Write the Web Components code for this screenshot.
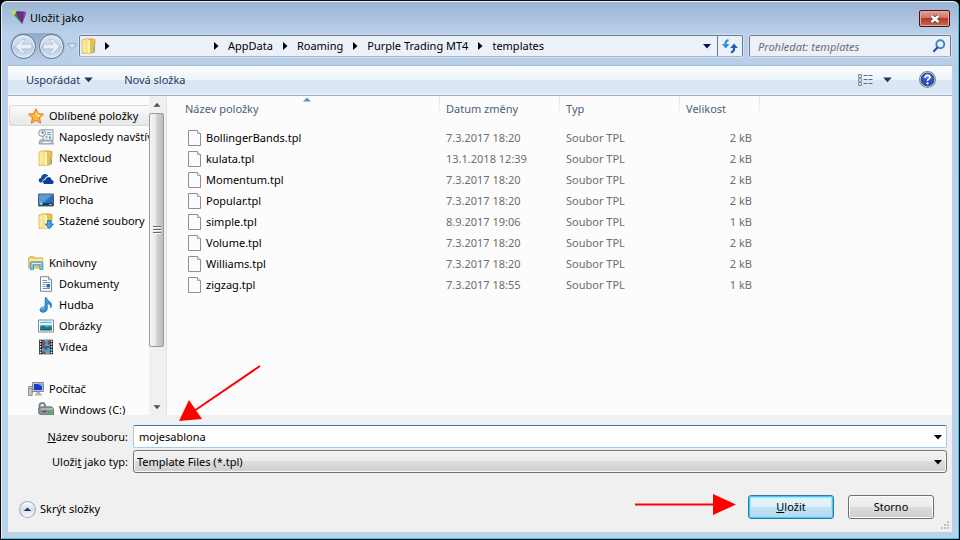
<!DOCTYPE html>
<html lang="cs">
<head>
<meta charset="utf-8">
<title>Uložit jako</title>
<style>
html,body{margin:0;background:#000}
body{font:11px/16px "Noto Sans","Open Sans",sans-serif;color:#000}
</style>
</head>
<body>
<save-dialog></save-dialog>

<script>
const FOLDER = `<path d="M1 2l5-1.500 1.500.5v14l-6.500.5z" fill="#f6df86" stroke="#cfae4a" stroke-width=".7"/><path d="M7.500 1.500L9 .6l5 1V7l-.8 1v6.500l-5.700 1z" fill="#e5c054" stroke="#c79f37" stroke-width=".7"/><path d="M6.700 1.500v13.700l2.300.3V2.500z" fill="#fff3b8"/><path d="M2.200 3v11.500M4 2.400v12" stroke="#fff2b5" stroke-width=".9"/>`;
const ICONS = {
  logo: `<path d="M0 1h9l3 13z" fill="#4aa03c"/><path d="M0 1h6L4 6z" fill="#e3dd25"/><path d="M3 5l2-2 5 10z" fill="#2a9560"/><path d="M5 1.500h8.500q2 .5 1 3L11.500 13q-.6 1.300-1.200 0L4.600 2.500z" fill="#6b2a86"/><path d="M13 1.500q3 .5 1.500 3L11.400 13z" fill="#8a4ba3"/>`,
  folder: FOLDER + `<path d="M13.300 8.500v5" stroke="#58a7dd" stroke-width="1.200"/>`,
  downloads: FOLDER + `<path d="M9.500 7.500h3.600V11h2.400l-4.200 4.700L7.200 11h2.300z" fill="#36a5ea" stroke="#1a6fb3" stroke-width=".8"/>`,
  star: `<path d="M8 .8l2.200 4.900 5.300.5-4 3.600 1.200 5.300L8 12.400l-4.700 2.700 1.200-5.300-4-3.600 5.300-.5z" fill="#fcb53a" stroke="#e0761c" stroke-width="1"/><path d="M8 3l1.500 3.600 3.300.3-2.600 2.200L8 7z" fill="#ffe48a"/>`,
  recent: `<path d="M5 .8h10v10.700H5z" fill="#edf3f8" stroke="#8d9aa5"/><path d="M9 3.500h4M9 5.500h4M7 8h3" stroke="#5a9bd0"/><path d="M11 7.500h2v2h-2z" fill="#6aa84f"/><path d="M2 11h12l1.500 4H1z" fill="#bcc2c7" stroke="#868e94" stroke-width=".8"/><path d="M5 13.500h7" stroke="#fff"/><circle cx="4" cy="4" r="3.400" fill="#eef2f4" stroke="#8d959b"/><path d="M4 1.800V4h2" stroke="#4d5964" fill="none" stroke-width=".9"/>`,
  onedrive: `<path d="M2.500 11.500Q.5 11 .6 9t2.500-2.200Q3.500 3 7 3q2.500 0 3.500 2-3 .2-3.800 3-2.500.5-2.200 3.500z" fill="#0e4da4"/><path d="M6.500 13Q4.700 12.500 5 10.700t2.400-2Q8 6 10.500 6t3.200 3q2.100.2 2 2.200T13.800 13z" fill="#0a3f97"/>`,
  desktop: `<path d="M.5 2h15v12H.5z" fill="#2c6cba" stroke="#54626f"/><path d="M1 2.500h14L6 10H1z" fill="#5898d8"/><path d="M1 11h14v2.500H1z" fill="#1b365f"/><circle cx="3" cy="11.500" r="1.800" fill="#53c1e8"/><path d="M2 11h2v1H2z" fill="#f3cf40"/><path d="M11 12.500h3" stroke="#aab7c6"/>`,
  libraries: `<path d="M.7 3l1-1.300h4l1 1.300h8v10H.7z" fill="#f1cd62" stroke="#cfa43b" stroke-width=".8"/><path d="M1.300 4.700h13" stroke="#fff1b3" stroke-width="1.500"/><path d="M2.300 14.500V9q0-2 2-2h8.500q2 0 2 2v5.500h-3V10H5.500v4.500z" fill="#83c5eb" stroke="#398bbf" stroke-width=".8"/><path d="M4 8.500h9" stroke="#d9f1ff"/>`,
  document: `<path d="M2.500.7h8l3 3v11.600h-11z" fill="#fdfdfd" stroke="#7e868e"/><path d="M10.500.7v3h3" fill="#dfe4e9" stroke="#7e868e" stroke-width=".8"/><path d="M4.500 4.500H9M4.500 6.500h7.500M4.500 8.500h3M4.500 10.500h3M4.500 12.500h7.500" stroke="#7295bd"/><path d="M8.500 8h3.500v3.500H8.500z" fill="#2465ad"/>`,
  music: `<path d="M8.300.5q.6 2.800 3.500 4.100 3.200 2.200 1 6.400.5-3.500-3.500-4.500v5.300q-.2 3.400-4.400 3.600Q1.600 15 2 12.500q.8-3 5-2.700L7.300.5z" fill="#3795d9" stroke="#1c67a8" stroke-width=".7"/><path d="M3.200 12q1-1.400 3-1.200" stroke="#b9e3ff" fill="none"/>`,
  pictures: `<path d="M.5 2h15v12H.5z" fill="#fff" stroke="#7f8a93"/><path d="M2.200 3.700h11.600v8.600H2.200z" fill="#5db4e6"/><path d="M2.200 6h11.600" stroke="#dff4ff" stroke-width="2"/><path d="M2.200 8.500q4-2 6 .7 3-1 5.600-.8v3.900H2.200z" fill="#2a7a63"/><path d="M2.200 11h11.600v1.300H2.200z" fill="#1f5d86"/>`,
  video: `<path d="M1 .7h14v14.600H1z" fill="#26292d"/><path d="M4 1h8v6.500H4z" fill="#4c9fda"/><path d="M4 8.500h8V15H4z" fill="#4aa2e0"/><path d="M4 1h2l1.500 3L6 7.500H4zM12 1h-1l-1.500 3L11 6l1-1zM5 8.500h5l-2 3zM4 13l2-1 2 3H4z" fill="#8f4a31"/><path d="M2.500 1.500v13.500M13.500 1.500v13.500" stroke="#e7eaec" stroke-width="1.600" stroke-dasharray="1.500 1.300"/>`,
  computer: `<path d="M.5 5.500h3.800v9H.5z" fill="#c3c8cc" stroke="#7c848b" stroke-width=".8"/><path d="M1.500 7.500h2" stroke="#4a9e3d"/><path d="M4.500 1.500h11v9h-11z" fill="#dfe3e6" stroke="#80888f"/><path d="M5.800 2.800h8.400v6.400H5.800z" fill="#153fc0"/><path d="M9.500 2.800h4.700v3z" fill="#6aa3f5"/><path d="M8.500 11h3.500v1.800h2v1.700h-7v-1.700h1.500z" fill="#aeb4b9"/>`,
  drive: `<path d="M1.500 8V3.500Q2 1 4.300 1T7 3.500V8" fill="none" stroke="#7e858b" stroke-width="2"/><path d="M.7 6.500L3 4.800h10.500l2 1.700v6.500H3L.7 11.500z" fill="#8d9398" stroke="#60676d" stroke-width=".8"/><path d="M3 7h12" stroke="#d3d7da"/><path d="M10 8.500h3.500v3H10z" fill="#2fc146"/><path d="M4 9.500h4.500" stroke="#4e555b" stroke-width="1.500"/>`,
  file: `<path d="M1.500.5h9l3 3v12h-12z" fill="#fbfbfb" stroke="#8f8f8f"/><path d="M10.500.5v3h3" fill="#f1f1f1" stroke="#8f8f8f" stroke-width=".8"/>`,
  refresh: `<path d="M3.500 8V5.500Q3.500 3 6.500 2" fill="none" stroke="#2b93d2" stroke-width="2.200"/><path d="M0 6h7.500L3.700 10.500z" fill="#2b93d2"/><path d="M12 8v3q0 2.500-3 3.500" fill="none" stroke="#1f60b4" stroke-width="2.200"/><path d="M8.200 10h7.600L12 5.500z" fill="#1f60b4"/>`,
  search: `<circle cx="9.500" cy="6" r="4.500" fill="#eef7ff" stroke="#3987d0" stroke-width="2.200"/><path d="M6.500 9.500L1.500 14.500" stroke="#22549b" stroke-width="2.500"/>`,
  view: `<path d="M.5 2.500h3v3h-3zM.5 6.500h3v3h-3zM.5 10.500h3v3h-3z" fill="#fff" stroke="#8593a5"/><path d="M1.500 7.500h1v1h-1z" fill="#d44a32"/><path d="M1.500 3.500h1v1h-1zM1.500 11.500h1v1h-1z" fill="#3b6fb4"/><path d="M5.500 3.500h9.500M5.500 7.500h9.500M5.500 11.500h9.500" stroke="#596b85" stroke-dasharray="4 1"/>`,
  help: `<circle cx="8" cy="8" r="7.500" fill="#dadde2" stroke="#7d828b"/><circle cx="8" cy="8" r="6" fill="#2a4fc0" stroke="#1d2f7c" stroke-width=".8"/><path d="M3.500 7q1-4 4.500-4t4.500 4z" fill="#6c8fe6"/><path d="M5.800 6.200Q6 4 8.100 4t2.100 2q0 1.200-1.200 1.700T8 9.500" fill="none" stroke="#fff" stroke-width="1.500"/><circle cx="8" cy="11.700" r="1" fill="#fff"/>`,
  down: `<path d="M4 6h8l-4 4.500z" fill="currentColor"/>`,
  right: `<path d="M6 4v8l4.500-4z" fill="currentColor"/>`,
  hollow: `<path d="M3 5.500h10L8 11z" fill="#e6eff8" stroke="#8299b6"/>`,
  collapse: `<defs><linearGradient id="c" x2="0" y2="1"><stop stop-color="#fff"/><stop offset=".5" stop-color="#d9dfe8"/><stop offset="1" stop-color="#fbfdff"/></linearGradient></defs><circle cx="8" cy="8" r="7.500" fill="url(#c)" stroke="#a3afc4"/><path d="M4.500 9.500h7L8 6z" fill="#1b3a72"/>`,
  close: `<path d="M4.500 5l7 6M11.500 5l-7 6" stroke="#5b3a42" stroke-width="4.200"/><path d="M4.500 5l7 6M11.500 5l-7 6" stroke="#fff" stroke-width="2.400"/>`
};

const BASE = `<style>
:host,*{box-sizing:border-box}
button,input,select{font:inherit;color:inherit;margin:0;padding:0;border:0;background:none;border-radius:0;min-width:0}
a{color:inherit;text-decoration:none}
</style>`;

function define(name, html, setup) {
  const template = document.createElement('template');
  template.innerHTML = BASE + html;
  customElements.define(name, class extends HTMLElement {
    constructor() {
      super();
      this.attachShadow({mode: 'open'}).append(template.content.cloneNode(true));
    }
    connectedCallback() { if (setup) setup(this, this.shadowRoot); }
  });
}

define('ui-icon', `<style>
:host{display:block;flex:none;width:var(--icon-size,16px);height:var(--icon-size,16px)}
svg{display:block;width:100%;height:100%}
</style><svg viewBox="0 0 16 16" aria-hidden="true"></svg>`,
(host, root) => { root.querySelector('svg').innerHTML = ICONS[host.getAttribute('name')]; });

define('title-bar', `<style>
:host{display:flex;align-items:center;gap:3px;padding:0 2px 0 3px;height:34px}
h1{font:inherit;margin:0;flex:1}
button{width:31px;height:17px;display:grid;place-items:center;border:1px solid #43141c;border-radius:2px;box-shadow:inset 0 0 0 1px #e7a69c;background:linear-gradient(#e0a096,#cf7465 48%,#b23a26 50%,#c96a55)}
</style>
<ui-icon name="logo"></ui-icon><h1><slot></slot></h1>
<button aria-label="Zavřít"><ui-icon name="close"></ui-icon></button>`);

define('nav-buttons', `<style>
:host{display:flex;align-items:center;flex:none}
.pair{display:flex;gap:3px;padding:1px;border-radius:14px;background:linear-gradient(#8fabca,#b5cbe3)}
.pair button{width:25px;height:25px;border-radius:50%;border:1px solid #60748b;box-shadow:inset 0 0 0 1px #e7f0f9;background:linear-gradient(#d9e6f3,#c6d6e8 48%,#b2c6de 50%,#d6e6f5)}
svg{display:block;margin:auto;width:19px;height:19px}
</style>
<div class="pair">
<button aria-label="Zpět"><svg viewBox="0 0 16 16"><path d="M1 8l6-6h3L6.500 6H15v4H6.500l3.500 4H7z" fill="#e6eff8" stroke="#a5b9cf" stroke-width=".6"/></svg></button>
<button aria-label="Vpřed"><svg viewBox="0 0 16 16"><path d="M15 8L9 2H6l3.500 4H1v4h8.500L6 14h3z" fill="#e6eff8" stroke="#a5b9cf" stroke-width=".6"/></svg></button>
</div>
<button aria-label="Poslední umístění"><ui-icon name="hollow" style="--icon-size:14px"></ui-icon></button>`);

define('address-bar', `<style>
:host{display:flex;flex:1;min-width:0;height:22px;border:1px solid #6f7a88;border-bottom-color:#a9b5c3;border-radius:2px;background:#eaf1f9;box-shadow:0 0 0 1px #d3e1f1}
nav{flex:1;display:flex;align-items:center;padding-left:1px;min-width:0;white-space:nowrap}
nav button{line-height:20px;padding:0 2px}
.user{width:89px;height:20px}
nav .arrow{margin:0 2px}
.icon{display:grid;place-items:center;width:20px;color:#00104f}
.reload{width:25px;border-left:1px solid #6f7a88}
</style>
<nav aria-label="Umístění"></nav>
<button class="icon" aria-label="Předchozí umístění"><ui-icon name="down"></ui-icon></button>
<button class="icon reload" aria-label="Aktualizovat"><ui-icon name="refresh"></ui-icon></button>`,
(host, root) => {
  const arrow = '<ui-icon class="arrow" name="right"></ui-icon>';
  root.querySelector('nav').innerHTML = '<ui-icon name="folder"></ui-icon>' + arrow +
    '<button class="user" aria-label="Uživatel"></button>' +
    host.getAttribute('path').split('/').map(p => `${arrow}<button>${p}</button>`).join('');
});

define('search-box', `<style>
:host{display:flex;align-items:center;width:202px;height:22px;margin-left:6px;padding:0 4px 0 8px;border:1px solid #6f7a88;border-bottom-color:#a9b5c3;border-radius:2px;background:#eaf1f9;box-shadow:0 0 0 1px #d3e1f1}
input{flex:1;height:20px;outline:0;font-style:italic}
input::placeholder{color:#6d6d6d;opacity:1}
</style><input type="search" aria-label="Prohledat" placeholder="Prohledat: templates"><ui-icon name="search" style="--icon-size:14px"></ui-icon>`);

define('command-bar', `<style>
:host{display:flex;align-items:center;height:31px;padding:0 14px 2px 16px;color:#1e395b;border-top:1px solid #a3bbd6;border-bottom:1px solid #a0b0c8;background:linear-gradient(#fbfdff,#edf4fc 48%,#dce7f5 50%,#dae6f4 90%,#e9f2fb)}
button{display:flex;align-items:center;height:24px;padding:0 2px;white-space:nowrap}
.new{margin-left:23px}
.space{flex:1}
.view{gap:5px}
.help{margin-left:19px}
</style>
<button>Uspořádat<ui-icon name="down" style="--icon-size:17px"></ui-icon></button>
<button class="new">Nová složka</button>
<span class="space"></span>
<button class="view" aria-label="Změnit zobrazení"><ui-icon name="view"></ui-icon><ui-icon name="down" style="--icon-size:17px"></ui-icon></button>
<button class="help" aria-label="Nápověda"><ui-icon name="help" style="--icon-size:17px"></ui-icon></button>`);

define('nav-item', `<style>
:host{display:block}
a{display:flex;align-items:center;gap:5px;height:21px;padding-left:29px;white-space:nowrap}
:host([top]) a{padding-left:19px}
:host([top]:not(:first-child)){margin-top:21px}
:host([selected]) a{padding-left:18px;border:1px solid #d9d9d9;border-right:0;border-radius:3px 0 0 3px;background:linear-gradient(#fafafa,#e7e7e7)}
</style><a href="#"><slot></slot></a>`,
(host, root) => root.querySelector('a').insertAdjacentHTML('afterbegin', `<ui-icon name="${host.getAttribute('icon')}"></ui-icon>`));

define('scroll-bar', `<style>
:host{display:flex;flex-direction:column;flex:none;width:17px;background:#f0f0f0}
button{height:17px;width:16px;display:grid;place-items:center;color:#505050}
.up ui-icon{rotate:180deg}
.track{flex:1}
.thumb{height:82%;width:15px;display:flex;flex-direction:column;gap:1px;justify-content:center;align-items:center;border:1px solid #9a9a9a;border-radius:2px;background:linear-gradient(90deg,#f6f6f6,#e6e6e8 45%,#cfcfd2 55%,#bdbdc0)}
i{width:8px;height:2px;background:#666;border-bottom:1px solid #fff}
</style>
<button class="up" aria-label="Nahoru"><ui-icon name="down" style="--icon-size:14px"></ui-icon></button>
<div class="track"><div class="thumb"><i></i><i></i><i></i></div></div>
<button aria-label="Dolů"><ui-icon name="down" style="--icon-size:14px"></ui-icon></button>`);

define('nav-pane', `<style>
:host{display:flex;flex:none;width:159px;min-height:0;border-right:1px solid #d3e4f4;background:#fcfcfc}
nav{flex:1;min-width:0;overflow:hidden;padding:9px 0 0 1px}
</style><nav aria-label="Složky"><slot></slot></nav><scroll-bar></scroll-bar>`);

define('file-list', `<style>
:host{display:block;flex:1;min-width:0;overflow:hidden;background:#fcfcfc}
table{border-collapse:separate;border-spacing:0;table-layout:fixed;width:593px}
th,td{padding:0 0 0 6px;text-align:left;font-weight:400;white-space:nowrap;color:#6d6d6d}
thead th{height:22px;color:#4c607a;padding-top:3px;line-height:18px;border-right:1px solid;border-image:linear-gradient(#d5e4f2,#fcfcfc) 1;position:relative}
thead th:first-child{padding-left:18px}
thead svg{position:absolute;top:1px;left:50%;width:8px;height:5px}
tbody::before{content:"";display:block;height:9px}
tbody th{height:21px;padding-left:20px;color:#000}
tbody th span{display:flex;align-items:center;gap:3px}
td:last-child{text-align:right;padding-right:8px}
</style>
<table><colgroup><col style="width:273px"><col style="width:120px"><col style="width:120px"><col style="width:80px"></colgroup>
<thead><tr><th scope="col" aria-sort="ascending">Název položky<svg viewBox="0 0 8 5" aria-hidden="true"><path d="M0 4.500L4 .5l4 4z" fill="#5d97bd"/></svg></th><th scope="col">Datum změny</th><th scope="col">Typ</th><th scope="col">Velikost</th></tr></thead>
<tbody></tbody></table>`,
(host, root) => {
  const files = [['BollingerBands','7.3.2017 18:20',2],['kulata','13.1.2018 12:39',2],['Momentum','7.3.2017 18:20',2],['Popular','7.3.2017 18:20',2],['simple','8.9.2017 19:06',1],['Volume','7.3.2017 18:20',2],['Williams','7.3.2017 18:20',2],['zigzag','7.3.2017 18:55',1]];
  root.querySelector('tbody').innerHTML = files.map(([n, d, s]) =>
    `<tr><th scope="row"><span><ui-icon name="file"></ui-icon>${n}.tpl</span></th><td>${d}</td><td>Soubor TPL</td><td>${s} kB</td></tr>`).join('');
});

define('save-fields', `<style>
:host{display:grid;grid-template-columns:120px 1fr;gap:2px 5px;align-items:center;padding:10px 5px 0 0}
label{text-align:right;white-space:nowrap}
.field{display:grid;grid-template-columns:1fr 16px;align-items:center;height:23px}
.field>*{grid-row:1}
.name{border:1px solid #a5cbe6;border-top-color:#3d7bad;border-radius:2px;background:#fff}
input{height:21px;padding-left:5px;outline:0}
.type{border:1px solid #707070;border-radius:3px;box-shadow:inset 0 0 0 1px #fafafa;background:linear-gradient(#f2f2f2,#ebebeb 48%,#dddddd 50%,#cfcfcf)}
select{appearance:none;grid-column:1/3;height:21px;padding-left:3px;outline:0}
.type ui-icon{grid-column:2;pointer-events:none}
</style>
<label for="name"><u>N</u>ázev souboru:</label>
<div class="field name"><input id="name" value="mojesablona"><button aria-label="Zobrazit názvy"><ui-icon name="down"></ui-icon></button></div>
<label for="type">Uloži<u>t</u> jako typ:</label>
<div class="field type"><select id="type"><option>Template Files (*.tpl)</option></select><ui-icon name="down"></ui-icon></div>`);

define('push-button', `<style>
:host{display:block;flex:none}
button{display:block;width:86px;height:24px;border:1px solid #707070;border-radius:3px;box-shadow:inset 0 0 0 1px #fbfbfb;background:linear-gradient(#f2f2f2,#ebebeb 48%,#dddddd 50%,#cfcfcf)}
:host([primary]) button{border-color:#2f7ba3;box-shadow:inset 0 0 0 1px #3fcdf5,inset 0 0 0 2px #a5e3f9;background:linear-gradient(#e6f4fc,#dcf0fb 48%,#c3e3f5 50%,#b3d9ee)}
</style><button><slot></slot></button>`);

define('dialog-footer', `<style>
:host{display:flex;align-items:center;padding:21px 18px 12px 11px}
.hide{display:flex;align-items:center;gap:4px;margin-right:auto;padding-top:4px}
.pointer{flex:none;width:101px;height:21px;margin:0 12px 5px 0}
push-button+push-button{margin-left:14px}
</style>
<button class="hide"><ui-icon name="collapse" style="--icon-size:17px"></ui-icon>Skrýt složky</button>
<svg class="pointer" viewBox="0 0 101 21" aria-hidden="true"><path d="M0 10.500h80" stroke="#f00" stroke-width="2"/><path d="M78 0v21l23-10.500z" fill="#f00"/></svg>
<push-button primary><u>U</u>ložit</push-button><push-button>Storno</push-button>`);

define('save-dialog', `<style>
:host{display:flex;flex-direction:column;height:100vh;min-height:360px;position:relative;padding:0 7px 7px;border:1px solid #0a0c12;border-radius:7px 7px 0 0;background:linear-gradient(#9ab3d2,#b9d1ea 33px,#b9cfe9 60px,#bad2ec);box-shadow:inset 0 1px #eff6fc,inset 1px 0 #e3eefa,inset -1px 0 #35c8e3,inset 0 -1px #35c8e3}
.address{display:flex;align-items:center;height:30px;padding:0 1px 8px 2px}
.browser{flex:1;display:flex;min-height:0}
.form{flex:none;background:#f0f0f0;position:relative}
.grip{position:absolute;right:2px;bottom:2px;width:10px;height:10px}
.marker{position:absolute;left:178px;bottom:118px;width:84px;height:58px}
</style>
<title-bar>Uložit jako</title-bar>
<div class="address"><nav-buttons></nav-buttons><address-bar path="AppData/Roaming/Purple Trading MT4/templates"></address-bar><search-box></search-box></div>
<command-bar></command-bar>
<main class="browser">
<nav-pane>
<nav-item top selected icon="star">Oblíbené položky</nav-item>
<nav-item icon="recent">Naposledy navštívené</nav-item>
<nav-item icon="folder">Nextcloud</nav-item>
<nav-item icon="onedrive">OneDrive</nav-item>
<nav-item icon="desktop">Plocha</nav-item>
<nav-item icon="downloads">Stažené soubory</nav-item>
<nav-item top icon="libraries">Knihovny</nav-item>
<nav-item icon="document">Dokumenty</nav-item>
<nav-item icon="music">Hudba</nav-item>
<nav-item icon="pictures">Obrázky</nav-item>
<nav-item icon="video">Videa</nav-item>
<nav-item top icon="computer">Počítač</nav-item>
<nav-item icon="drive">Windows (C:)</nav-item>
</nav-pane>
<file-list></file-list>
</main>
<div class="form"><save-fields></save-fields><dialog-footer></dialog-footer>
<svg class="grip" viewBox="0 0 10 10" aria-hidden="true"><path d="M7 1h2v2H7zM7 4h2v2H7zM7 7h2v2H7zM4 4h2v2H4zM4 7h2v2H4zM1 7h2v2H1z" fill="#c2c2c2"/></svg></div>
<svg class="marker" viewBox="0 0 84 58" aria-hidden="true"><path d="M81 3L15 48" stroke="#f00" stroke-width="2"/><path d="M0 58l10-21 13 19z" fill="#f00"/></svg>`);
</script>
</body>
</html>
